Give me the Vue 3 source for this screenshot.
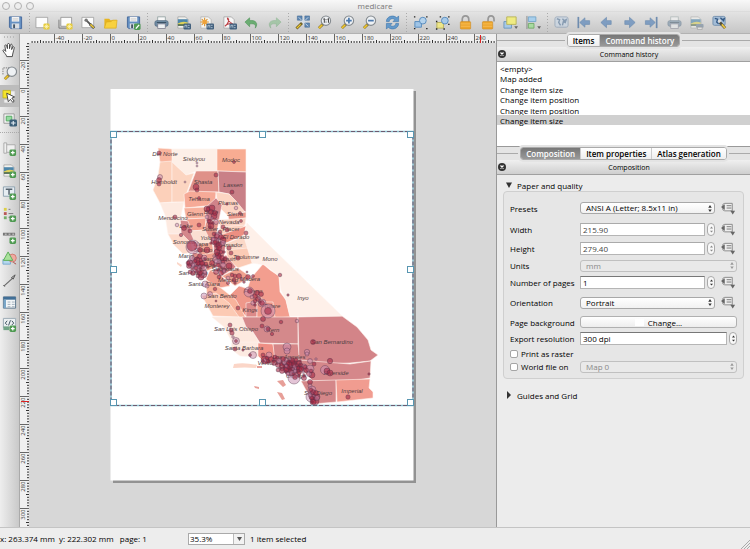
<script setup>
import { computed, onBeforeUnmount, onMounted, reactive, ref } from 'vue'

const badgePlus = '<rect x="8" y="9" width="7" height="7" rx="1.5" fill="#4f9a52"/><path d="M11.500 10.500v4M9.500 12.500h4" stroke="#fff" stroke-width="1.300"/>'
const star = '<rect x="9" y="9" width="6.500" height="6.500" rx="1.500" fill="#e5cb3c"/><path d="M12.200 9.800v5M9.800 12.300h5M10.500 10.600l3.400 3.400M13.900 10.600l-3.400 3.400" stroke="#fff8c8" stroke-width=".7"/>'
const disk = '<path d="M1.500 2h13v12.500h-11.500l-1.500-1.500z" fill="#6590c2" stroke="#44699c"/><rect x="4" y="2" width="8" height="5" fill="#f4f4f4"/><path d="M5 4h6M5 5.500h6" stroke="#b9b9b9" stroke-width=".6"/><rect x="4" y="9" width="8" height="5.500" fill="#d9dde2"/><rect x="5.500" y="10" width="2" height="4" fill="#456"/>'
const lens = '<path d="M6.500 9.500L2 14" stroke="#7b6a2c" stroke-width="3"/><path d="M5.500 10.500L2 14" stroke="#edc52f" stroke-width="1.800"/><circle cx="9.500" cy="6" r="5" fill="#eef1f4" stroke="#858b90" stroke-width="1.200"/>'
const badgeExport = '<rect x="8" y="9" width="8" height="6.500" rx="1.200" fill="#42607d"/><path d="M9.500 13.500v-2.500h2v2.500M12.500 11h2M12.500 13.500h2" stroke="#c5d5e4" stroke-width=".8" fill="none"/>'
const picture = '<path d="M2 2h8l3 3v9h-11z" fill="#f2f2ee" stroke="#999" stroke-width=".7"/><rect x="2" y="4.500" width="10.500" height="6" fill="#4d86aa"/><path d="M2 9q5-3 10.500-1v2.500h-10.500z" fill="#ddd15b"/><path d="M2 10h10.500v1.500h-10.500z" fill="#37553c"/>'
const printer = '<rect x="4" y="2" width="8" height="5" fill="#f8f8f8" stroke="#899" stroke-width=".8"/><rect x="1" y="6" width="14" height="6" rx="2" fill="#718da5" stroke="#516a80" stroke-width=".8"/><rect x="4" y="9.500" width="8" height="5" fill="#eef1f3" stroke="#778" stroke-width=".8"/><path d="M3 8h10" stroke="#384f62"/>'
const arrow = 'fill="#6a90bd" stroke="#567ba6" stroke-width=".7"'

const icons = {
  save: disk,
  fresh: '<path d="M1 2.500h12.500v11h-12.500z" fill="#fcfcfc" stroke="#999" stroke-width=".8"/>' + star,
  copy: '<path d="M1 5v9h10" fill="none" stroke="#777"/><path d="M3 2.500h11.500v9.500h-11.500z" fill="#fcfcfc" stroke="#888" stroke-width=".8"/>' + star,
  manage: '<path d="M1 2.500h12.500v11h-12.500z" fill="#fcfcfc" stroke="#999" stroke-width=".8"/><path d="M6 6l4 4" stroke="#555" stroke-width="2"/><circle cx="5.500" cy="5.500" r="1.800" fill="#777"/><path d="M9.500 9.500l4.500 4.500" stroke="#444" stroke-width="3"/><path d="M10 10l3.700 3.700" stroke="#efcb39" stroke-width="1.600"/>',
  folder: '<path d="M1.500 13.500v-9.500h5l1.500 1.500h6v8z" fill="#e8b51f"/><path d="M1.500 14l2-6.500q6 0 7-2h4.500l-1 8.500z" fill="#f8d13f" stroke="#dba91d" stroke-width=".7"/>',
  saveAs: disk + '<rect x="8.500" y="9" width="7" height="7" rx="1.500" fill="#4f9a52"/><path d="M10.500 14.500l3.500-4" stroke="#fff" stroke-width="1.500"/>',
  printer,
  image: picture + badgeExport,
  svg: '<path d="M2 2h8l3 3v9h-11z" fill="#f5f5f2" stroke="#aaa" stroke-width=".7"/><path d="M6 3v9M1.500 7.500h9M3 4.500l6 6M9 4.500l-6 6" stroke="#dc932f" stroke-width="1.200"/><circle cx="6" cy="7.500" r="2.400" fill="#efa238"/>' + badgeExport,
  pdf: '<path d="M2 2h8l3 3v9h-11z" fill="#f7f7f7" stroke="#999" stroke-width=".7"/><path d="M3 12c4-3 5-7 3.500-8.500s-1 3 5 6c-3-1-7 .5-8.500 2.500" fill="none" stroke="#bb3d42" stroke-width="1.100"/>' + badgeExport,
  undo: '<path d="M1 7.500l5-4.500v3c7-1 9.500 3.500 6 8c1-4-1-5-6-4.500v3z" fill="#6cad73" stroke="#4d9355" stroke-width=".6"/>',
  redo: '<g opacity=".55"><path d="M15 7.500l-5-4.500v3c-7-1-9.500 3.500-6 8c-1-4 1-5 6-4.500v3z" fill="#7fba84" stroke="#5d9f64" stroke-width=".6"/></g>',
  full: '<rect x="5" y="3" width="8" height="8" fill="#d5dde5"/><path d="M2.500 1h5v4.500h-5zM10.500 1h5v4.500h-5zM10.500 8.500h5v4.500h-5z" fill="#5d87b3" stroke="#456b94" stroke-width=".6"/><path d="M4 2.500l3 3M14 2.500l-3 3M14 12l-3-3" stroke="#d5e0ec" stroke-width=".9"/><path d="M7.500 8.500l-6 6" stroke="#736329" stroke-width="3"/><path d="M6 10l-4 4" stroke="#eec833" stroke-width="1.500"/>',
  actual: lens + '<path d="M6.800 4.500l1-.8v4.600M11.200 4.500l1-.8v4.600" fill="none" stroke="#333"/><path d="M9.600 4.500v1M9.600 7v1" stroke="#333"/>',
  zoomIn: lens + '<path d="M6.500 6h6M9.500 3v6" stroke="#4b79ad" stroke-width="1.800"/>',
  zoomOut: lens + '<path d="M6.500 6h6" stroke="#4b79ad" stroke-width="1.800"/>',
  refresh: '<path d="M1.500 7c0-6 8-7.500 11-4l2-2v6h-6l2-2c-2-2-6-1-6 2zM14.500 9c0 6-8 7.500-11 4l-2 2v-6h6l-2 2c2 2 6 1 6-2z" fill="#649acb" stroke="#4278ae" stroke-width=".7"/>',
  group: '<path d="M2 7h7v6h-7z" fill="#9fc4e6" stroke="#568bbd"/><circle cx="10.500" cy="6" r="3.600" fill="#b4d2ec" stroke="#568bbd"/><path d="M1 2h1.500M14 2h1.500M1 14.500h1.500M14 14.500h1.500" stroke="#222" stroke-width="1.500"/>',
  ungroup: '<path d="M2 8h7v6h-7z" fill="#eee78a" stroke="#b7b05c"/><circle cx="10.500" cy="6" r="3.600" fill="#a7cae9" stroke="#568bbd"/><path d="M5 2h1.500M14 2h1.500M1 7h1.500M14 10h1.500M1 15h1.500M9 15h1.500" stroke="#222" stroke-width="1.500"/>',
  lock: '<path d="M4.500 8v-3q0-4 3.500-4t3.500 4v3" fill="none" stroke="#979797" stroke-width="1.800"/><rect x="2.500" y="7" width="11" height="8" rx="1" fill="#eda52c" stroke="#c98925" stroke-width=".6"/><path d="M3 9.500h10M3 12h10" stroke="#f6bd55"/>',
  unlock: '<path d="M7.500 7v-2q0-4 3.200-4t3.200 4v2" fill="none" stroke="#979797" stroke-width="1.800"/><rect x="1.500" y="7" width="11" height="8" rx="1" fill="#eda52c" stroke="#c98925" stroke-width=".6"/><path d="M2 9.500h10M2 12h10" stroke="#f6bd55"/>',
  raise: '<path d="M1 7h8v7h-8z" fill="#a7c9e6" stroke="#6e98bd"/><path d="M4 2h10v8h-10z" fill="#efeb82" stroke="#b9b45a"/><path d="M12 12h4l-2 3z" fill="#666"/>',
  align: '<path d="M1 1v14" stroke="#888"/><path d="M2.500 2h8v5h-8z" fill="#a8cfec" stroke="#76a6ca"/><path d="M2.500 9h6v5h-6z" fill="#a9dba1" stroke="#73aa6b"/><path d="M12 12h4l-2 3z" fill="#666"/>',
  atlas: '<g opacity=".65"><rect x="1" y="2" width="14" height="11" rx="2" fill="#c8d6e5" stroke="#8399b0"/><path d="M3 4l3 1-1 3 2 3M9 4l2 2 2-1-1 3-2-1-1 4" fill="none" stroke="#5d7c9e" stroke-width="1.500"/></g>',
  first: `<g opacity=".8"><path d="M2.500 2v12" stroke="#567ba6" stroke-width="1.800"/><path d="M4 8l5.500-5v3h5v4h-5v3z" ${arrow}/></g>`,
  prev: `<g opacity=".8"><path d="M2 8l6-5.500v3.500h5v4h-5v3.500z" ${arrow}/></g>`,
  next: `<g opacity=".8"><path d="M14 8l-6-5.500v3.500h-5v4h5v3.500z" ${arrow}/></g>`,
  last: `<g opacity=".8"><path d="M13.500 2v12" stroke="#567ba6" stroke-width="1.800"/><path d="M12 8l-5.500-5v3h-5v4h5v3z" ${arrow}/></g>`,
  printAtlas: `<g opacity=".55">${printer}</g>`,
  exportAtlas: `<g opacity=".6">${picture}<rect x="7.500" y="9.500" width="8" height="4" rx="1" fill="#70869b"/><path d="M9 13h5v2.500h-5z" fill="#eee" stroke="#777" stroke-width=".6"/></g>`,
  settings: '<rect x="1" y="1.500" width="13" height="9.500" rx="1.500" fill="#a4bdd7" stroke="#7390ae"/><path d="M3 3.500l3 1-1 3 2 2M9 3l2 2 2-1-1 3" fill="none" stroke="#345984" stroke-width="1.400"/><circle cx="8" cy="6.500" r="1.800" fill="#ddd"/><path d="M8.500 8l5.500 6" stroke="#544e38" stroke-width="3"/><path d="M10.500 10l3.500 4" stroke="#eac641" stroke-width="1.800"/>',
  hand: '<path d="M5 14.500c0-2-3.500-4.500-4-6.500c.5-1.500 2-.5 3 1l-1-6c.2-1.500 1.800-1.200 2 0l.8 3v-4.500c.3-1.400 2-1.300 2.200 0v4.500l1-4c.5-1.300 2-.8 1.900.5l-.6 4.500 1-2.500c.8-1 2-.5 1.700.8c-.6 3.500-1.500 5-2 9.200z" fill="#fff" stroke="#333" stroke-width=".9"/>',
  zoom: '<path d="M1 9v-7h7" fill="none" stroke="#777" stroke-dasharray="1.500 1"/><g transform="translate(1 0)">' + lens + '</g>',
  select: '<path d="M9 2h5v8h-5zM2 11h9v4h-9z" fill="#eee" stroke="#bbb" stroke-width=".8"/><path d="M1 1.500h8v8h-8z" fill="#f4e42e" stroke="#c2b419" stroke-width=".8"/><path d="M5 4.500l8.500 4-3 1.200 2.500 3.300-1.500 1.200-2.600-3.200-2.200 2.500z" fill="#fff" stroke="#333" stroke-width=".9"/>',
  moveContent: '<path d="M2 2h11v10h-11z" fill="#f3f3f3" stroke="#999"/><path d="M4.500 4.500h6v5h-6z" fill="#95dca0" stroke="#53a660"/><rect x="8" y="8" width="8" height="7.500" rx="1.500" fill="#3c5f78"/><path d="M9.500 11.700h5M12 9.500v4.500" stroke="#e5eef5" stroke-width="1.200"/>',
  addMap: '<path d="M2 2h3v11h-3zM5 4h9v8h-9" fill="#f0f0f0" stroke="#aaa"/>' + badgePlus,
  addImage: picture + badgePlus,
  addLabel: '<path d="M1.500 2h12v10h-12z" fill="#e6edf2" stroke="#8ca0ae"/><path d="M4 4.500h7M7.500 4.500v6" stroke="#55636e" stroke-width="1.600"/>' + badgePlus,
  addLegend: '<path d="M2 1h3v3h-3z" fill="#dccf47"/><path d="M2 5.500h3v3h-3z" fill="#b85757"/><path d="M2 10h3v3h-3z" fill="#73ad68"/><path d="M7 2.500h2M7 7h5M7 11h4" stroke="#777"/>' + badgePlus,
  addScale: '<path d="M1 4h13v3h-13z" fill="#777"/><path d="M3 5.500h2M7 5.500h2M11 5.500h2" stroke="#ddd"/>' + badgePlus,
  addShape: '<path d="M1 9h8v5h-8z" fill="#b5d8ee" stroke="#78aace"/><circle cx="11" cy="7.500" r="4.200" fill="#efaba1" stroke="#cf7a70"/><path d="M6.500 1l5 9h-10z" fill="#a9e19b" stroke="#5bac55"/><path d="M12 12l3 2" stroke="#a54c45"/>',
  addArrow: '<path d="M2 14l10-9" stroke="#666" stroke-width="1.200"/><path d="M10 5l4-3-2 4.500z" fill="#bbb" stroke="#555"/><path d="M1.500 13l1.500 1.500" stroke="#555"/>',
  addTable: '<path d="M1.500 2h13v12h-13z" fill="#f3f6f8" stroke="#56728a"/><path d="M1.500 2h13v3h-13z" fill="#416f97"/><path d="M3 5v9" stroke="#79a6c8" stroke-width="2.500"/><path d="M6 7.500h3M10.500 7.500h3M6 10h3M10.500 10h3M6 12.500h3M10.500 12.500h3" stroke="#9cabb7"/>',
  addHtml: '<path d="M1.500 1.500h13v10h-13z" fill="#ecf0f2" stroke="#9baab4"/><path d="M5.500 4l-2 2.500 2 2M10.500 4l2 2.500-2 2M9 3.500l-2 5.500" fill="none" stroke="#394d5a"/><path d="M1.500 10h6v4h-6z" fill="#72a487"/>' + badgePlus,
}

const toolGroups = [
  ['save'],
  ['fresh', 'copy', 'manage', 'folder', 'saveAs'],
  ['printer', 'image', 'svg', 'pdf', 'undo', 'redo'],
  ['full', 'actual', 'zoomIn', 'zoomOut', 'refresh'],
  ['group', 'ungroup', 'lock', 'unlock', 'raise', 'align'],
  ['atlas', 'first', 'prev', 'next', 'last', 'printAtlas', 'exportAtlas', 'settings'],
]
const navTools = ['hand', 'zoom', 'select', 'moveContent']
const addTools = ['addMap', 'addImage', 'addLabel', 'addLegend', 'addScale', 'addShape', 'addArrow', 'addTable', 'addHtml']

// Ruler marks fill the measured stage: one every 2 mm at 1.4 px per mm
const stage = ref(null)
const size = reactive({ w: 0, h: 0 })
let observer
const measure = () => {
  size.w = stage.value.clientWidth
  size.h = stage.value.clientHeight - 9
}
onMounted(() => {
  measure()
  observer = new ResizeObserver(measure)
  observer.observe(stage.value)
})
onBeforeUnmount(() => observer.disconnect())
const marks = (from, origin, limit) => {
  const out = []
  for (let mm = from; origin + mm * 1.4 < limit; mm += 2) {
    const at = origin + mm * 1.4
    out.push({ mm, at, major: mm % 20 === 0, mid: mm % 10 === 0, label: mm % 20 === 0 && at + 12 < limit })
  }
  return out
}
const hMarks = computed(() => marks(-56, 90.5, size.w))
const vMarks = computed(() => marks(-32, 46.5, size.h))

const counties = [
  ['158,148 172,149 173,161 165,163 160,162', '#f8b59e'],
  ['172,149 217,149 217,171 196,171 186,175 172,162', '#fdefe7'],
  ['217,149 246,149 246,172 217,171', '#f8ac92'],
  ['160,162 172,161 172,202 160,203 153,190 158,176', '#fcd0ba'],
  ['172,162 186,175 194,173 187,192 184,202 172,202', '#fcd5c1'],
  ['196,171 218,171 219,192 188,192', '#df9189'],
  ['218,171 246,172 246,212 240,211 235,201 229,194 219,192', '#c98087'],
  ['184,194 190,191 216,192 215,205 185,208', '#f6aa97'],
  ['216,192 229,194 236,201 245,212 228,216 218,206', '#fdd5c3'],
  ['228,215 246,212 246,218 229,221', '#eb988a'],
  ['184,208 206,207 206,218 186,219', '#f7b19d'],
  ['206,207 216,198 222,205 219,220 206,222', '#d0838a'],
  ['186,219 206,218 205,230 190,231', '#f5a290'],
  ['180,220 188,221 195,239 186,243 181,233', '#d4878b'],
  ['160,203 184,202 180,220 181,234 168,234 165,215', '#fdeae1'],
  ['168,234 182,234 191,243 193,252 183,254 174,245', '#fddaca'],
  ['219,220 246,218 245,225 230,230 220,227', '#fcd4c3'],
  ['220,227 245,225 235,236 218,236', '#fbd3c0'],
  ['218,236 246,226 244,235 224,244', '#ec8f82'],
  ['206,222 219,220 216,237 211,242 204,231', '#e39489'],
  ['190,231 205,230 212,244 197,247', '#fbdfd2'],
  ['194,245 212,242 214,254 201,256', '#f4a693'],
  ['213,240 226,242 224,257 215,262', '#cd7b82'],
  ['225,244 244,236 250,249 232,254 226,249', '#fbd8c7'],
  ['226,250 248,248 253,263 238,268 228,260', '#fbcbb5'],
  ['193,252 201,254 206,270 197,275 190,264', '#df8d87'],
  ['201,255 217,252 218,266 207,271', '#ef9e8d'],
  ['215,262 226,255 236,267 222,276', '#d58084'],
  ['222,276 238,268 251,277 235,286', '#f0a18f'],
  ['210,270 222,276 230,286 214,289 206,279', '#f09d8d'],
  ['251,278 263,264 270,270 279,276 280,292 286,300 290,317 274,318 266,302 247,290', '#f39e8f'],
  ['239,286 249,289 264,300 264,310 248,318 232,304 229,296', '#ef988a'],
  ['206,280 221,288 236,300 246,318 223,315 207,297', '#f8b39c'],
  ['202,296 216,293 229,303 239,317 213,316', '#fccab4'],
  ['246,303 257,301 257,317 246,317', '#dc8988'],
  ['257,302 273,302 275,318 257,318', '#f1988a'],
  ['212,317 243,317 252,330 260,344 232,342 224,327', '#fde9df'],
  ['242,317 298,317 298,344 260,343 253,332 246,327', '#d4898b'],
  ['232,342 258,342 258,357 240,356 231,349', '#fdeae1'],
  ['258,343 273,344 276,362 266,364 258,356', '#ef8e84'],
  ['273,344 298,344 300,362 305,368 299,378 288,369 275,362', '#d58688'],
  ['298,317 342,316 357,327 368,340 371,350 378,355 370,361 350,363 315,364 299,360', '#d38488'],
  ['299,360 350,364 371,361 370,378 352,381 313,381 304,372', '#d5878a'],
  ['301,381 336,380 336,402 312,404 307,392', '#d48789'],
  ['336,380 370,379 369,388 373,392 373,398 337,402', '#f19c90'],
  ['247,223 272,248 342,316 290,316 286,300 281,290 279,276 265,265 252,263 244,237', '#fef0e9'],
]

const labels = [
  ['Del Norte', 165, 156], ['Siskiyou', 194, 161], ['Modoc', 231, 162], ['Humboldt', 164, 184],
  ['Shasta', 203, 184], ['Lassen', 233, 187], ['Tehama', 199, 201], ['Plumas', 228, 205],
  ['Mendocino', 173, 220], ['Glenn', 195, 216], ['Butte', 211, 214], ['Sierra', 235, 216], ['Lake', 186, 228],
  ['Nevada', 229, 224], ['Placer', 231, 231], ['Sutter', 210, 231], ['El Dorado', 236, 239], ['Yolo', 206, 240],
  ['Amador', 232, 247], ['Sonoma', 184, 244], ['Napa', 201, 246], ['Solano', 203, 252], ['Marin', 186, 258],
  ['San Mateo', 193, 275], ['Alameda', 203, 267], ['San Joaquin', 219, 261], ['Tuolumne', 246, 259], ['Mono', 270, 261],
  ['Stanislaus', 225, 271], ['Santa Clara', 204, 286], ['Merced', 228, 282], ['Madera', 250, 281], ['San Benito', 222, 298],
  ['Monterey', 217, 308], ['Fresno', 253, 293], ['Kings', 250, 312], ['Tulare', 272, 308], ['Inyo', 303, 300],
  ['San Luis Obispo', 236, 331], ['Kern', 273, 332], ['Santa Barbara', 244, 350], ['Ventura', 268, 365], ['Los Angeles', 289, 359],
  ['San Bernardino', 332, 344], ['Riverside', 336, 375], ['Orange', 296, 378], ['San Diego', 318, 395], ['Imperial', 352, 393],
]

// x, y, radius, strong fill
const bubbles = [
  [159, 153, 2, 1], [197, 163, 1, 0], [197, 166, 1, 0], [234, 162, 1.5, 1], [160, 177, 2.5, 0], [159, 180, 2.5, 1], [159, 184, 2, 1],
  [185, 182, 1, 0], [216, 175, 2, 1], [196, 187, 3, 1], [197, 190, 2, 1], [199, 198, 1.5, 1], [232, 192, 2, 1], [227, 204, 1.2, 1],
  [236, 208, 1.8, 0], [240, 213, 1.5, 1], [175, 217, 2, 1], [177, 225, 1.8, 0], [184, 228, 2.5, 1], [190, 231, 2, 1], [181, 235, 1.7, 1],
  [199, 225, 2, 1], [207, 209, 3, 1], [212, 208, 3, 1], [214, 216, 3, 1], [210, 222, 2.5, 1], [211, 226, 3, 1], [223, 227, 2, 1],
  [241, 221, 1.5, 1], [227, 230, 2, 1], [246, 233, 2, 1], [218, 236, 4, 0], [215, 241, 4, 1], [223, 240, 3, 1], [219, 245, 3, 1],
  [229, 248, 2.2, 1], [231, 253, 2, 1], [193, 247, 7, 0], [192, 246, 5, 1], [200, 250, 2.5, 1], [207, 250, 3, 1], [192, 263, 5, 0],
  [190, 263, 3, 1], [197, 260, 3, 1], [201, 265, 4, 1], [204, 258, 3, 0], [197, 269, 4, 0], [203, 274, 4, 1], [201, 277, 3, 1],
  [217, 252, 3, 1], [218, 256, 3, 1], [217, 260, 4, 0], [223, 262, 2, 1], [229, 266, 3, 1], [224, 270, 2, 1], [235, 276, 2, 1],
  [228, 283, 1.6, 1], [238, 258, 2.2, 1], [247, 272, 1, 1], [253, 276, 1.5, 1], [205, 284, 3, 0], [207, 286, 2, 0], [215, 289, 1.8, 1],
  [204, 296, 3, 0], [210, 294, 2.5, 0], [216, 301, 1, 1], [238, 308, 2, 1], [249, 292, 5, 0], [250, 291, 2.5, 1], [255, 296, 2.5, 1],
  [258, 299, 2.5, 1], [253, 303, 2.2, 0], [262, 303, 4, 0], [262, 303, 2.5, 1], [268, 311, 7, 0], [268, 311, 3.5, 1], [263, 319, 2.5, 1],
  [262, 326, 2, 1], [267, 329, 3, 0], [268, 329, 2, 1], [272, 334, 1.7, 1], [281, 322, 1.8, 1], [297, 321, 1.8, 0], [280, 275, 1.8, 1],
  [288, 295, 1.2, 1], [230, 325, 2, 1], [231, 330, 2, 1], [232, 333, 2.2, 1], [233, 337, 1.3, 0], [236, 341, 3.5, 0], [236, 341, 1.5, 1],
  [235, 349, 2, 1], [243, 350, 1.2, 1], [253, 355, 3.5, 0], [250, 355, 1.5, 1], [263, 355, 2, 1], [265, 360, 4, 1], [269, 355, 3, 0],
  [287, 347, 4, 0], [287, 351, 3, 0], [313, 342, 2.5, 1], [307, 352, 2.7, 0], [307, 354, 2, 0], [316, 359, 1.2, 0], [330, 361, 2.7, 1],
  [325, 370, 4.5, 0], [327, 371, 3, 1], [330, 373, 3, 1], [369, 374, 1.2, 1], [348, 397, 2.2, 1], [310, 361, 2.5, 0], [304, 367, 3, 0],
  [310, 369, 4, 0], [314, 364, 2, 1], [312, 375, 3, 1], [310, 382, 2.5, 1], [310, 386, 2, 0], [312, 390, 4, 0], [311, 397, 5, 0],
  [312, 397, 3, 1], [315, 401, 4, 1], [317, 397, 3, 1], [313, 402, 3, 1], [294, 378, 6, 0], [289, 366, 6, 1], [291, 369, 7, 1],
]
const scatter = (cx, cy, rx, ry, n) => {
  for (let i = 0; i < n; i++) {
    const a = i * 2.4
    const d = Math.sqrt((i + 0.5) / n)
    bubbles.push([Math.round(cx + rx * d * Math.cos(a)), Math.round(cy + ry * d * Math.sin(a)), 1.3 + (i % 3) * 0.6, i % 4 ? 1 : 0])
  }
}
scatter(290, 366, 13, 8, 44)
scatter(271, 360, 10, 3, 12)
scatter(301, 372, 11, 7, 16)
scatter(198, 266, 11, 11, 26)
scatter(219, 262, 7, 15, 20)
scatter(217, 240, 7, 9, 12)
scatter(211, 218, 6, 11, 9)
scatter(238, 279, 14, 5, 8)
scatter(257, 298, 6, 8, 7)
scatter(313, 396, 4, 7, 9)

const handles = [[110, 131], [259, 131], [407, 131], [110, 266], [407, 266], [110, 399], [259, 399], [407, 399]]

const history = ['<empty>', 'Map added', 'Change item size', 'Change item position', 'Change item position', 'Change item size']
const current = ref(5)
const sideTab = ref('Command history')
const mainTab = ref('Composition')
const width = ref('215.90')
const height = ref('279.40')
const pages = ref('1')
const dpi = ref('300 dpi')
const raster = ref(false)
const world = ref(false)
</script>

<template>
  <div class="window">
    <header class="titlebar">
      <div class="lights"><button aria-label="Close"></button><button aria-label="Minimize"></button><button aria-label="Zoom"></button></div>
      <h1>medicare</h1>
    </header>

    <nav class="toolbar">
      <div v-for="(g, i) in toolGroups" :key="i" class="group" :style="{ flexGrow: g.length }">
        <button v-for="t in g" :key="t" :aria-label="t"><svg viewBox="0 0 16 16" v-html="icons[t]"></svg></button>
      </div>
    </nav>

    <div class="body">
      <nav class="tools">
        <div class="grip"></div>
        <div class="nav-tools">
          <button v-for="t in navTools" :key="t" :aria-label="t" :class="{ active: t === 'select' }"><svg viewBox="0 0 16 16" v-html="icons[t]"></svg></button>
        </div>
        <div class="add-tools">
          <button v-for="t in addTools" :key="t" :aria-label="t"><svg viewBox="0 0 16 16" v-html="icons[t]"></svg></button>
        </div>
      </nav>

      <main ref="stage" class="stage">
        <svg class="ruler-h">
          <g v-for="m in hMarks" :key="m.mm">
            <path :d="`M${m.at} ${m.major ? 0 : m.mid ? 6 : 7}V9`" :class="m.major ? 'major' : 'minor'" />
            <text v-if="m.label" :x="m.at + 1" y="6">{{ m.mm }}</text>
          </g>
          <path class="cursor" d="M460.500 1v8" />
        </svg>
        <svg class="ruler-v">
          <g v-for="m in vMarks" :key="m.mm">
            <path :d="`M${m.major ? 0 : m.mid ? 6 : 7} ${m.at - 1}H9`" :class="m.major ? 'major' : 'minor'" />
            <text v-if="m.label" :transform="`translate(5 ${m.at}) rotate(-90)`" text-anchor="end">{{ m.mm }}</text>
          </g>
          <path class="cursor" d="M1 358.500h8" />
        </svg>
        <svg class="canvas" viewBox="29 43 467 484" preserveAspectRatio="xMinYMin meet">
          <rect x="113" y="91" width="303" height="392" fill="#929292" />
          <rect x="110.500" y="89" width="303" height="391.500" fill="#fff" />
          <g stroke="#fff4ee" stroke-width=".6" stroke-linejoin="round">
            <polygon v-for="c in counties" :key="c[0]" :points="c[0]" :fill="c[1]" />
          </g>
          <path d="M177 262l5 3-1 2-4-3zM234 364q10-2 23 1l-1 3q-11-1-23 0z" fill="#fbd6c8" />
          <path d="M277 381l6-1 3 5-3 2zM277 392l5 1 3 6-3 1zM254 386l5 1v2l-4-1zM257 366h5v2h-5z" fill="#e79f98" />
          <g class="names"><text v-for="l in labels" :key="l[0]" :x="l[1]" :y="l[2]">{{ l[0] }}</text></g>
          <circle v-for="(b, i) in bubbles" :key="i" :cx="b[0]" :cy="b[1]" :r="b[2]" :fill="b[3] ? '#a52845' : '#c98bb0'" :fill-opacity="b[3] ? 0.6 : 0.5" stroke="#4e3145" stroke-width=".5" stroke-opacity=".75" />
          <rect x="111" y="131.500" width="302" height="274" fill="none" stroke="#8cc4d2" stroke-width="1.500" />
          <rect x="111" y="131.500" width="302" height="274" fill="none" stroke="#6d5a70" stroke-width="1.200" stroke-dasharray="4 2" />
          <rect v-for="(h, i) in handles" :key="i" :x="h[0] + 0.5" :y="h[1] + 0.5" width="6" height="6" fill="#fff" stroke="#5896b1" />
        </svg>
      </main>

      <aside class="panel">
        <div class="tabs">
          <div class="tabset">
            <button v-for="t in ['Items', 'Command history']" :key="t" :class="{ on: sideTab === t }" @click="sideTab = t">{{ t }}</button>
          </div>
        </div>
        <div class="dock-title">
          <button aria-label="Close dock"><svg viewBox="0 0 8 8"><circle cx="4" cy="4" r="4" fill="#333" /><path d="M2.500 2.500l3 3M5.500 2.500l-3 3" stroke="#fff" stroke-width="1.200" /></svg></button>
          <h2>Command history</h2>
        </div>
        <ul class="history">
          <li v-for="(h, i) in history" :key="i" :class="{ current: current === i }" @click="current = i">{{ h }}</li>
        </ul>
        <div class="tabs">
          <div class="tabset">
            <button v-for="t in ['Composition', 'Item properties', 'Atlas generation']" :key="t" :class="{ on: mainTab === t }" @click="mainTab = t">{{ t }}</button>
          </div>
        </div>
        <div class="dock-title">
          <button aria-label="Close dock"><svg viewBox="0 0 8 8"><circle cx="4" cy="4" r="4" fill="#333" /><path d="M2.500 2.500l3 3M5.500 2.500l-3 3" stroke="#fff" stroke-width="1.200" /></svg></button>
          <h2>Composition</h2>
        </div>

        <section class="settings">
          <button class="fold"><svg viewBox="0 0 8 8"><path d="M1 1.500h6l-3 5.500z" /></svg>Paper and quality</button>
          <form class="box" @submit.prevent>
            <label for="preset">Presets</label>
            <div class="field over">
              <span class="pick"><select id="preset"><option>ANSI A (Letter; 8.5x11 in)</option></select><svg viewBox="0 0 4 8"><path d="M0 3l2-3 2 3zM0 5l2 3 2-3z" /></svg></span>
              <button class="override" aria-label="Override preset"><svg viewBox="0 0 16 13"><path d="M4 1h8v8h-8l-2-1v-6z" class="sheet" /><path d="M4 2v6l-4-3z" class="tip" /><path d="M6 3.500h5M6 6h5" class="lines" /><path d="M10 9h5l-2.500 4z" class="tip" /></svg></button>
            </div>
            <template v-for="f in [['w', 'Width'], ['h', 'Height']]" :key="f[0]">
              <label :for="f[0]">{{ f[1] }}</label>
              <div class="field over">
                <input v-if="f[0] === 'w'" id="w" v-model="width" type="text" class="soft">
                <input v-else id="h" v-model="height" type="text" class="soft">
                <button class="spin dim" aria-label="Step value"><svg viewBox="0 0 4 8"><path d="M0 2.500l2-2.500 2 2.500zM0 5.500l2 2.500 2-2.500z" /></svg></button>
                <button class="override" aria-label="Override size"><svg viewBox="0 0 16 13"><path d="M4 1h8v8h-8l-2-1v-6z" class="sheet" /><path d="M4 2v6l-4-3z" class="tip" /><path d="M6 3.500h5M6 6h5" class="lines" /><path d="M10 9h5l-2.500 4z" class="tip" /></svg></button>
              </div>
            </template>
            <label for="units">Units</label>
            <div class="field"><span class="pick"><select id="units" disabled><option>mm</option></select><svg class="faint" viewBox="0 0 4 8"><path d="M0 3l2-3 2 3zM0 5l2 3 2-3z" /></svg></span></div>
            <label for="pages">Number of pages</label>
            <div class="field over">
              <input id="pages" v-model="pages" type="text">
              <button class="spin" aria-label="Step pages"><svg viewBox="0 0 4 8"><path d="M0 2.500l2-2.500 2 2.500zM0 5.500l2 2.500 2-2.500z" /></svg></button>
              <button class="override" aria-label="Override pages"><svg viewBox="0 0 16 13"><path d="M4 1h8v8h-8l-2-1v-6z" class="sheet" /><path d="M4 2v6l-4-3z" class="tip" /><path d="M6 3.500h5M6 6h5" class="lines" /><path d="M10 9h5l-2.500 4z" class="tip" /></svg></button>
            </div>
            <label for="orient">Orientation</label>
            <div class="field over">
              <span class="pick"><select id="orient"><option>Portrait</option><option>Landscape</option></select><svg viewBox="0 0 4 8"><path d="M0 3l2-3 2 3zM0 5l2 3 2-3z" /></svg></span>
              <button class="override" aria-label="Override orientation"><svg viewBox="0 0 16 13"><path d="M4 1h8v8h-8l-2-1v-6z" class="sheet" /><path d="M4 2v6l-4-3z" class="tip" /><path d="M6 3.500h5M6 6h5" class="lines" /><path d="M10 9h5l-2.500 4z" class="tip" /></svg></button>
            </div>
            <label for="bg">Page background</label>
            <div class="field"><button id="bg" class="change"><i></i>Change...</button></div>
            <label for="dpi">Export resolution</label>
            <div class="field">
              <input id="dpi" v-model="dpi" type="text">
              <button class="spin" aria-label="Step resolution"><svg viewBox="0 0 4 8"><path d="M0 2.500l2-2.500 2 2.500zM0 5.500l2 2.500 2-2.500z" /></svg></button>
            </div>
            <label class="check wide"><input v-model="raster" type="checkbox">Print as raster</label>
            <label class="check"><input v-model="world" type="checkbox">World file on</label>
            <div class="field"><span class="pick"><select disabled aria-label="World file map"><option>Map 0</option></select><svg class="faint" viewBox="0 0 4 8"><path d="M0 3l2-3 2 3zM0 5l2 3 2-3z" /></svg></span></div>
          </form>
          <button class="fold guides"><svg viewBox="0 0 8 8"><path d="M2 0v8l4-4z" /></svg>Guides and Grid</button>
        </section>
      </aside>
    </div>

    <footer class="status">
      <span class="coords">x: 263.374 mm&nbsp; y: 222.302 mm&nbsp;&nbsp; page: 1</span>
      <span class="zoom"><input value="35.3%" type="text" aria-label="Zoom level"><button aria-label="Zoom choices"><svg viewBox="0 0 5 4"><path d="M0 0h5l-2.500 4z" /></svg></button></span>
      <span>1 item selected</span>
      <svg class="corner" viewBox="0 0 10 10"><path d="M1 10l9-9M4 10l6-6M7 10l3-3" /></svg>
    </footer>
  </div>
</template>

<style>
body { margin: 0; }
</style>

<style scoped>
.window { min-height: 100vh; display: flex; flex-direction: column; background: #ececec; color: #000; font: 500 8px/11px "Open Sans", "Noto Sans", sans-serif; overflow: hidden; }
* { box-sizing: border-box; }
button, input, select { font: inherit; color: inherit; margin: 0; padding: 0; border: 0; background: none; min-width: 0; }
svg { display: block; }
h1, h2 { margin: 0; font-size: 7px; font-weight: 500; text-align: center; }

.titlebar { height: 12px; display: grid; grid-template-columns: 60px 1fr 60px; align-items: center; background: linear-gradient(#f8f8f8, #e6e6e6); border-bottom: 1px solid #dcdcdc; }
.titlebar h1 { color: #777; font-size: 8px; }
.lights { display: flex; gap: 4px; padding-left: 2px; }
.lights button { width: 8px; height: 8px; border: 1px solid #b0b0b0; border-radius: 50%; background: #eee; }

.toolbar { height: 22px; display: flex; padding: 0 19px 0 4px; background: linear-gradient(#e3e3e3, #c6c6c6); border-bottom: 1px solid #b2b2b2; }
.group { flex: 1 0 0; display: flex; align-items: center; }
.group + .group { padding-left: 5px; background: repeating-linear-gradient(#aaa 0 1px, transparent 1px 3px) 2px 1px / 1px 20px no-repeat; }
.group button { flex: 1; display: grid; place-items: center; }
.group svg, .tools button svg { width: 15px; height: 15px; }

.body { flex: 1; display: grid; grid-template-columns: 20px minmax(0, 1fr) 254px; }
.tools { background: linear-gradient(90deg, #eee, #c9c9c9); border-right: 1px solid #aaa; }
.grip { height: 5px; background: repeating-linear-gradient(90deg, #bbb 0 1px, transparent 1px 3px) 4px 2px / 12px 2px no-repeat; }
.tools button { display: grid; place-items: center; width: 18px; height: 22px; }
.tools .active { background: #bcbcbc; width: 19px; }
.nav-tools { display: grid; gap: 1px; padding-bottom: 2px; border-bottom: 1px dotted #aaa; }
.add-tools { padding-top: 4px; }

.stage { display: grid; grid-template: 9px minmax(0, 1fr) / 9px minmax(0, 1fr); background: #d7d7d7; min-height: 0; }
.ruler-h { grid-column: 1 / 3; width: 100%; height: 9px; background: #f0f0f0; overflow: hidden; }
.ruler-v { width: 9px; height: 100%; background: #f0f0f0; overflow: hidden; }
.ruler-h text, .ruler-v text { font-size: 6px; fill: #333; }
.major { stroke: #666; }
.minor { stroke: #333; }
.cursor { stroke: #d22; }
.canvas { width: 100%; height: 100%; }
.names text { font: italic 6px "Liberation Sans", sans-serif; fill: #503e43; text-anchor: middle; }

.panel { border-left: 1px solid #999; background: #ececec; }
.tabs { height: 13px; display: flex; justify-content: center; background: linear-gradient(#aaa, #aaa) 0 6px / 100% 1px no-repeat #e4e4e4; }
.tabset { display: flex; border: 1px solid #aaa; border-radius: 3px; background: #fafafa; overflow: hidden; outline: 2px solid #e4e4e4; }
.tabset button { padding: 0 5px; line-height: 11px; font-weight: 600; background: linear-gradient(#fff, #eee); }
.tabset button + button { border-left: 1px solid #ccc; }
.tabset .on { background: linear-gradient(#777, #999); color: #fff; }
.dock-title { height: 15px; display: grid; grid-template-columns: 11px 1fr 0; align-items: center; background: linear-gradient(#f0f0f0, #cfcfcf); border-bottom: 1px solid #a0a0a0; }
.dock-title button { width: 8px; padding: 0; margin-left: 1px; }
.history { height: 85px; margin: 0; padding: 1px 0 0; list-style: none; display: grid; grid-template-rows: repeat(8, minmax(0, 1fr)); background: #fff; border-bottom: 1px solid #999; }
.history li { padding-left: 3px; line-height: 11px; }
.history .current { background: #d0d0d0; }

.settings { padding: 4px 6px; }
.fold { display: flex; align-items: center; gap: 4px; padding: 0 2px; height: 12px; }
.fold svg { width: 8px; height: 8px; fill: #333; }
.box { display: grid; grid-template-columns: 70px minmax(0, 1fr); grid-template-rows: 22px 20px 18px 17px 17px 23px 16px 17px 13px 13px; align-items: center; padding: 5px 6px 5px; border: 1px solid #cfcfcf; border-radius: 4px; background: #e6e6e6; white-space: nowrap; }
.field { display: flex; align-items: center; gap: 2px; }
.field input { flex: 1; height: 13px; padding: 0 2px; background: #fff; border: 1px solid #b5b5b5; border-top-color: #777; }
.field .soft { color: #444; border-top-color: #aaa; }
.spin { width: 8px; height: 13px; border: 1px solid #aaa; border-radius: 4px; background: #f8f8f8; display: grid; place-items: center; }
.spin svg { width: 3px; height: 7px; fill: #333; }
.dim svg { fill: #888; }
.override { width: 16px; margin-left: 4px; }
.override svg { width: 15px; height: 13px; }
.sheet { fill: #eee; stroke: #888; }
.tip { fill: #666; }
.lines { stroke: #777; }
.pick { flex: 1; display: grid; align-items: center; }
.pick select { grid-area: 1 / 1; height: 12px; padding: 0 5px; appearance: none; border: 1px solid #a8a8a8; border-radius: 3px; background: linear-gradient(#fff, #f1f1f1); line-height: 10px; }
.pick select:disabled { color: #888; opacity: 1; background: #e9e9e9; border-color: #c0c0c0; }
.pick svg { grid-area: 1 / 1; justify-self: end; width: 4px; height: 7px; margin-right: 3px; fill: #333; pointer-events: none; }
.pick .faint { fill: #999; }
.change { flex: 1; height: 12px; display: flex; justify-content: center; align-items: center; gap: 4px; border: 1px solid #b0b0b0; border-radius: 3px; background: linear-gradient(#fff, #ededed); }
.change i { width: 9px; height: 7px; background: #fff; }
.check { display: flex; align-items: center; gap: 3px; }
.wide { grid-column: 1 / 3; }
.check input { appearance: none; width: 8px; height: 8px; border: 1px solid #a5a5a5; border-radius: 2px; background: #fff; }
.check input:checked { background: #555; }
.guides { margin-top: 10px; }

.status { height: 22px; display: flex; align-items: center; gap: 5px; border-top: 1px solid #c4c4c4; background: #ededed; white-space: nowrap; }
.coords { width: 183px; }
.zoom { display: flex; width: 57px; height: 12px; border: 1px solid #aaa; background: #fff; }
.zoom input { flex: 1; width: 30px; padding-left: 1px; }
.zoom button { width: 11px; display: grid; place-items: center; border-left: 1px solid #bbb; background: #f2f2f2; }
.zoom svg { width: 5px; height: 4px; fill: #555; }
.corner { width: 10px; height: 10px; margin-left: auto; align-self: flex-end; stroke: #aaa; fill: none; }
</style>
